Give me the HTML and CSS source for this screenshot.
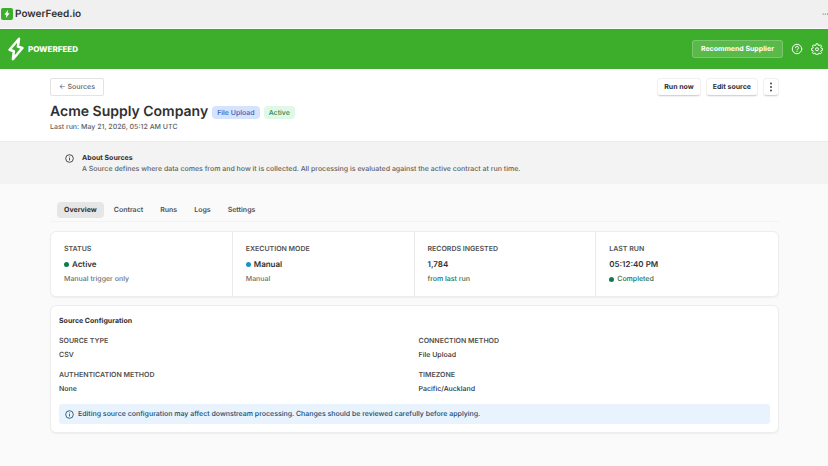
FILE: index.html
```
<!DOCTYPE html>
<html lang="en">
<head>
    <meta charset="UTF-8">
    <meta name="viewport" content="width=device-width, initial-scale=1.0">
    <title>PowerFeed.io</title>
    <link rel="stylesheet" href="styles.css">
</head>
<body>
    <div class="app-bar">
        <svg class="app-icon" viewBox="0 0 12 12" aria-hidden="true">
            <rect width="12" height="12" rx="2" fill="#3dae2b"/>
            <path d="M7 1.8 3.4 6.7h2L4.9 10.3 8.6 5.3h-2z" fill="#fff"/>
        </svg>
        <span class="app-name">PowerFeed.io</span>
        <button class="app-more" type="button" aria-label="More">
            <svg viewBox="0 0 8 8" fill="#555"><circle cx="1.5" cy="4" r=".8"/><circle cx="4.4" cy="4" r=".8"/><circle cx="7.3" cy="4" r=".8"/></svg>
        </button>
    </div>

    <header class="nav">
        <a class="brand" href="#">
            <svg class="brand-icon" viewBox="0 0 16 24" fill="none" stroke="#fff" stroke-width="2.5" stroke-linejoin="round" stroke-linecap="round" aria-hidden="true">
                <path d="M11 1.8 1.6 12.7l4.3 1.5-1 8L14.4 11l-4.5-1.4z"/>
            </svg>
            <span class="brand-name">POWERFEED</span>
        </a>
        <div class="nav-actions">
            <button class="recommend" type="button">Recommend Supplier</button>
            <button class="nav-icon" type="button" aria-label="Help">
                <svg viewBox="0 0 24 24" fill="none" stroke="#fff" stroke-width="2" stroke-linecap="round">
                    <circle cx="12" cy="12" r="9.5"/>
                    <path d="M9 9.5a3 3 0 1 1 4.4 2.6c-.9.5-1.4 1-1.4 2"/>
                    <path d="M12 17.2v.1"/>
                </svg>
            </button>
            <button class="nav-icon" type="button" aria-label="Settings">
                <svg viewBox="0 0 24 24" fill="none" stroke="#fff" stroke-width="2" stroke-linejoin="round">
                    <path d="M10.3 1.5h3.4l.7 3 1.7.7 2.6-1.6 2.4 2.4-1.6 2.6.7 1.7 3 .7v3.4l-3 .7-.7 1.7 1.6 2.6-2.4 2.4-2.6-1.6-1.7.7-.7 3h-3.4l-.7-3-1.7-.7-2.6 1.6-2.4-2.4 1.6-2.6-.7-1.7-3-.7v-3.4l3-.7.7-1.7-1.6-2.6 2.4-2.4 2.6 1.6 1.7-.7z"/>
                    <circle cx="12" cy="12.5" r="3"/>
                </svg>
            </button>
        </div>
    </header>

    <section class="page-header">
        <div class="toolbar">
            <a class="btn btn-outline" href="#">← Sources</a>
            <div class="toolbar-actions">
                <button class="btn" type="button">Run now</button>
                <button class="btn" type="button">Edit source</button>
                <button class="btn btn-icon" type="button" aria-label="More actions">
                    <svg viewBox="0 0 4 12" fill="#333"><circle cx="2" cy="2.5" r=".9"/><circle cx="2" cy="6" r=".9"/><circle cx="2" cy="9.5" r=".9"/></svg>
                </button>
            </div>
        </div>
        <div class="title-row">
            <h1>Acme Supply Company</h1>
            <span class="badge badge-blue">File Upload</span>
            <span class="badge badge-green">Active</span>
        </div>
        <p class="last-run">Last run: May 21, 2026, 05:12 AM UTC</p>
    </section>

    <section class="about">
        <svg class="info-icon" viewBox="0 0 16 16" fill="none" stroke="currentColor" stroke-width="1.5" aria-hidden="true">
            <circle cx="8" cy="8" r="6.8"/>
            <path d="M8 7.2v4.2M8 4.4v1.6"/>
        </svg>
        <div>
            <h2>About Sources</h2>
            <p>A Source defines where data comes from and how it is collected. All processing is evaluated against the active contract at run time.</p>
        </div>
    </section>

    <main class="content">
        <nav class="tabs">
            <a class="tab active" href="#">Overview</a>
            <a class="tab" href="#">Contract</a>
            <a class="tab" href="#">Runs</a>
            <a class="tab" href="#">Logs</a>
            <a class="tab" href="#">Settings</a>
        </nav>

        <section class="card stats">
            <div class="stat">
                <h3>STATUS</h3>
                <p class="stat-value"><span class="dot dot-green"></span>Active</p>
                <p class="stat-note">Manual trigger only</p>
            </div>
            <div class="stat">
                <h3>EXECUTION MODE</h3>
                <p class="stat-value"><span class="dot dot-blue"></span>Manual</p>
                <p class="stat-note">Manual</p>
            </div>
            <div class="stat">
                <h3>RECORDS INGESTED</h3>
                <p class="stat-value">1,784</p>
                <p class="stat-note success">from last run</p>
            </div>
            <div class="stat">
                <h3>LAST RUN</h3>
                <p class="stat-value">05:12:40 PM</p>
                <p class="stat-note success"><span class="dot dot-green"></span>Completed</p>
            </div>
        </section>

        <section class="card config">
            <h2>Source Configuration</h2>
            <dl class="fields">
                <div>
                    <dt>SOURCE TYPE</dt>
                    <dd>CSV</dd>
                </div>
                <div>
                    <dt>CONNECTION METHOD</dt>
                    <dd>File Upload</dd>
                </div>
                <div>
                    <dt>AUTHENTICATION METHOD</dt>
                    <dd>None</dd>
                </div>
                <div>
                    <dt>TIMEZONE</dt>
                    <dd>Pacific/Auckland</dd>
                </div>
            </dl>
            <div class="notice">
                <svg class="info-icon" viewBox="0 0 16 16" fill="none" stroke="currentColor" stroke-width="1.5" aria-hidden="true">
                    <circle cx="8" cy="8" r="6.8"/>
                    <path d="M8 7.2v4.2M8 4.4v1.6"/>
                </svg>
                <p>Editing source configuration may affect downstream processing. Changes should be reviewed carefully before applying.</p>
            </div>
        </section>
    </main>
</body>
</html>
```
FILE: styles.css
```
* {
    box-sizing: border-box;
}
body {
    margin: 0;
    font-family: Inter, "Liberation Sans", sans-serif;
    font-size: 7px;
    font-weight: 500;
    line-height: 12px;
    text-rendering: geometricPrecision;
    color: #303030;
    background-color: #fafafb;
}
h1, h2, h3, p, dl, dd {
    margin: 0;
}
a {
    color: inherit;
    text-decoration: none;
}
button {
    font: inherit;
    color: inherit;
    text-rendering: inherit;
    cursor: pointer;
}
svg {
    display: block;
    flex-shrink: 0;
}
.app-bar {
    display: flex;
    align-items: center;
    gap: 2px;
    height: 29px;
    padding-left: 1px;
    background-color: #f0f0f0;
    border-bottom: 1px solid #fafafa;
}
.app-icon {
    width: 12px;
    height: 12px;
}
.app-name {
    font-size: 10px;
    font-weight: 600;
}
.app-more {
    margin-left: auto;
    padding: 0;
    border: none;
    background: none;
}
.app-more svg {
    width: 6px;
    height: 6px;
}
.nav {
    display: flex;
    align-items: center;
    justify-content: space-between;
    height: 40px;
    padding: 0 5px 0 8px;
    background-color: #3dae2b;
    color: #fff;
}
.brand {
    display: flex;
    align-items: center;
    gap: 4px;
}
.brand-icon {
    width: 16px;
    height: 24px;
}
.brand-name {
    font-size: 8px;
    font-weight: 800;
}
.nav-actions {
    display: flex;
    align-items: center;
    gap: 8px;
}
.recommend {
    height: 18px;
    padding: 0 8px;
    font-weight: 700;
    background-color: rgba(255, 255, 255, 0.15);
    border: 1px solid rgba(255, 255, 255, 0.2);
    border-radius: 3px;
}
.nav-icon {
    padding: 0;
    border: none;
    background: none;
}
.nav-icon svg {
    width: 12px;
    height: 12px;
}
.page-header {
    padding: 9px 49px 9px 50px;
    background-color: #fff;
}
.toolbar, .toolbar-actions, .title-row {
    display: flex;
    align-items: center;
}
.toolbar {
    justify-content: space-between;
}
.toolbar-actions {
    gap: 5px;
}
.btn {
    display: flex;
    align-items: center;
    justify-content: center;
    height: 18px;
    padding: 0 6px;
    font-weight: 700;
    background-color: #fff;
    border: 1px solid #f0f0f0;
    border-bottom-color: #d4d4d4;
    border-radius: 4px;
    box-shadow: 0 1px 1px rgba(0, 0, 0, 0.06);
}
.btn-outline {
    padding: 0 8px;
    font-weight: 500;
    color: #616161;
    border-color: #e3e3e3;
    border-radius: 2px;
    box-shadow: none;
}
.btn-icon {
    width: 16px;
    padding: 0;
}
.btn-icon svg {
    width: 4px;
    height: 12px;
}
.title-row {
    gap: 4px;
    margin-top: 7px;
}
h1 {
    font-size: 14px;
    line-height: 18px;
    font-weight: 600;
}
.badge {
    padding: 0 5px;
    border-radius: 4px;
    line-height: 13px;
}
.badge-blue {
    background-color: #d5e3ff;
    color: #3a62b5;
}
.badge-green {
    background-color: #dff8e8;
    color: #2b8757;
}
.last-run {
    line-height: 11px;
    color: #616161;
}
.about {
    display: flex;
    gap: 8px;
    padding: 10px 65px;
    background-color: #f3f3f3;
    border-top: 1px solid #ebebeb;
}
.about h2, .about p {
    font-size: 7px;
    line-height: 11px;
}
.about h2 {
    font-weight: 700;
}
.about p {
    color: #616161;
}
.info-icon {
    width: 9px;
    height: 9px;
}
.about .info-icon {
    margin-top: 2px;
}
.content {
    padding: 18px 49px 33px 50px;
}
.tabs {
    display: flex;
    gap: 3px;
    padding: 0 7px 3px;
    border-bottom: 1px solid #f3f3f5;
}
.tab {
    padding: 2px 7px;
    border-radius: 4px;
    font-weight: 600;
    color: #505050;
}
.tab.active {
    background-color: #e6e6e6;
    font-weight: 700;
    color: #303030;
}
.card {
    margin-top: 9px;
    background-color: #fff;
    border: 1px solid #ededed;
    border-radius: 6px;
    box-shadow: 0 1px 1px rgba(0, 0, 0, 0.05);
}
.stats {
    display: grid;
    grid-template-columns: repeat(4, 1fr);
}
.stat {
    padding: 11px 13px;
    border-right: 1px solid #ebebeb;
}
.stat:last-child {
    border-right: none;
}
h3, dt {
    font-size: 7px;
    line-height: 12px;
    font-weight: 600;
    color: #505050;
}
.stat-value, .stat-note {
    display: flex;
    align-items: center;
    gap: 3px;
    margin-top: 3px;
}
.stat-value {
    font-size: 8px;
    font-weight: 600;
}
.stat-note {
    color: #707070;
}
.success {
    color: #23704f;
}
.dot {
    width: 5px;
    height: 5px;
    border-radius: 50%;
}
.dot-green {
    background-color: #107a50;
}
.dot-blue {
    background-color: #1694c9;
}
.config {
    margin-top: 8px;
    padding: 9px 8px 8px;
}
.config h2 {
    font-size: 7px;
    line-height: 12px;
    font-weight: 700;
}
.fields {
    display: grid;
    grid-template-columns: 1fr 1fr;
    gap: 8px;
    margin-top: 8px;
}
dd {
    margin-top: 2px;
}
.notice {
    display: flex;
    align-items: center;
    gap: 4px;
    margin-top: 9px;
    padding: 4px 6px;
    background-color: #e8f3fe;
    border-radius: 3px;
    color: #174a6b;
}
```
